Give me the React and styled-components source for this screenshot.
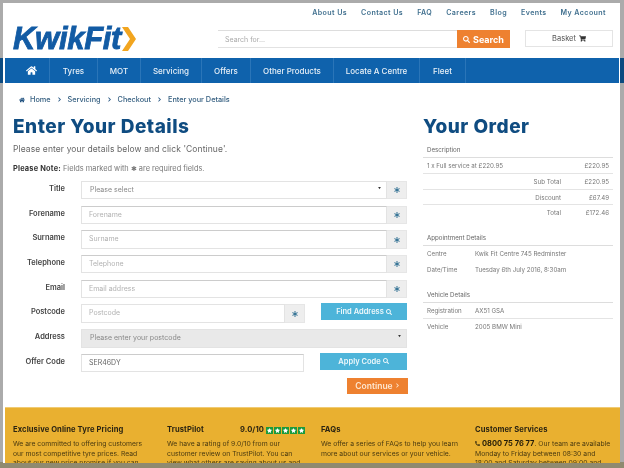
import React from "react";
import styled, { createGlobalStyle } from "styled-components";
import { FaHome, FaSearch, FaChevronRight, FaAsterisk, FaShoppingCart, FaPhoneAlt, FaStar } from "react-icons/fa";

const Global = createGlobalStyle`
  html, body { margin: 0; padding: 0; background: #aaa; }
  * { box-sizing: border-box; }
`;

const Frame = styled.div`
  width: 624px; height: 468px; overflow: hidden;
  padding: 3px 4px 5px 3px;
  font-family: "Inter", "Liberation Sans", sans-serif;
  color: #444;
  background: linear-gradient(to bottom, #ababab 58px, #0b4a80 58px, #0b4a80 83px, #ababab 83px, #ababab 462px, #8f8a70 462px);
`;
const Page = styled.div`
  height: 100%; background: #fff; overflow: hidden;
  display: flex; flex-direction: column; filter: blur(0.55px);
`;
const TopLinks = styled.div`
  display: flex; justify-content: flex-end; gap: 14px; height: 19px; padding: 5px 14px 0 0;
`;
const TopLink = styled.span`
  font-size: 7.1px; font-weight: 600; color: #41708f; letter-spacing: .4px; line-height: 9px;
`;
const Header = styled.div`
  display: flex; align-items: flex-start; height: 36px; padding-left: 10px;
`;
const Logo = styled.div`
  display: flex; align-items: center; width: 205px; height: 27px; margin-top: 3px; gap: 0;
`;
const LogoText = styled.span`
  font-family: "Liberation Sans", sans-serif; font-style: italic; font-weight: 700;
  font-size: 31px; letter-spacing: -.3px; color: #125ba4; -webkit-text-stroke: .8px #125ba4; line-height: 27px;
`;
const Search = styled.div`
  display: flex; width: 292px; height: 18px; margin-top: 8px;
  border-top: 1px solid #ddd; border-bottom: 1px solid #e2e2e2;
`;
const SearchInput = styled.div`
  flex: 1; font-size: 7px; color: #aaa; padding: 4px 0 0 7px; line-height: 9px;
`;
const SearchButton = styled.div`
  width: 53px; margin: -1px 0; background: #ee8130; color: #fff; font-size: 9px; font-weight: 700;
  display: flex; align-items: center; justify-content: center; gap: 3px;
  svg { width: 7px; height: 7px; }
`;
const Basket = styled.div`
  width: 88px; height: 17px; margin: 8px 0 0 15px; border: 1px solid #e4e4e4;
  display: flex; align-items: center; justify-content: center; gap: 3px; font-size: 7.5px; color: #555;
  svg { width: 7px; height: 7px; color: #333; }
`;
const Nav = styled.nav`
  display: flex; height: 25px; margin: 0 1px 0 2px; background: #0f62ac;
`;
const NavItem = styled.div`
  width: ${p => p.$w}px; border-right: 1px solid #2a75b8; color: #e8f0f7;
  display: flex; align-items: center; justify-content: center; font-size: 8px; font-weight: 500;
  padding-left: ${p => p.$home ? 9 : 0}px;
  svg { width: 11px; height: 11px; color: #fff; }
`;
const Crumbs = styled.div`
  display: flex; align-items: center; height: 32px; padding: 1px 0 0 16px; font-size: 7.3px; font-weight: 500; color: #355f80;
`;
const CrumbHome = styled.span`
  display: inline-flex; margin-right: 5px; svg { width: 6px; height: 6px; color: #1d4f7e; }
`;
const CrumbSep = styled.span`
  display: inline-flex; margin: 0 6px; svg { width: 5px; height: 5px; color: #1d4f7e; }
`;
const Main = styled.div`
  flex: 1; display: flex; min-height: 0;
`;
const Left = styled.div`
  width: 404px; padding-left: 10px; flex: none;
`;
const Right = styled.div`
  width: 210px; padding: 0 0 0 16px; flex: none;
`;
const Title = styled.h1`
  margin: 0; font-size: 19px; line-height: 24px; font-weight: 800; color: #0f4c81; letter-spacing: .5px;
`;
const Intro = styled.p`
  margin: 5px 0 0; font-size: 8.5px; line-height: 11px; color: #666; letter-spacing: .1px;
`;
const Note = styled.p`
  margin: 9px 0 0; height: 16px; font-size: 7.4px; line-height: 9px; color: #777;
  b { color: #333; font-weight: 700; letter-spacing: .2px; }
`;
const Form = styled.div`
  display: flex; flex-direction: column; gap: 6.3px; padding-top: 1px;
`;
const Row = styled.div`
  display: flex; height: 18.4px;
`;
const Label = styled.div`
  width: 52px; text-align: right; font-size: 7.5px; font-weight: 600; color: #444; line-height: 15px; margin-right: 16px; flex: none;
`;
const Control = styled.div`
  display: flex; width: ${p => p.$w}px; height: 100%; flex: none;
`;
const Field = styled.div`
  flex: 1; border: 1px solid #e3e3e3; border-top-color: ${p => p.$strong ? "#ccc" : "#e3e3e3"};
  background: ${p => p.$disabled ? "#e9e9e9" : "#fff"};
  padding-left: ${p => p.$select ? 8 : 7}px; font-size: 7px; line-height: 15px; color: ${p => p.$value ? "#666" : p.$select ? "#888" : "#b2b2b2"};
  display: flex; justify-content: space-between; padding-right: 5px;
`;
const Caret = styled.span`
  font-size: 3px; color: #333; line-height: 15px;
`;
const Addon = styled.div`
  width: 20px; background: #eee; border: 1px solid #e6e6e6; border-left: 0;
  display: flex; align-items: center; justify-content: center;
  svg { width: 6px; height: 6px; color: #2f6f92; }
`;
const Action = styled.div`
  width: 87px; margin: -1px 0 0 16px; height: 17px; background: #4db4d9; color: #eef8fb; font-size: 7.5px; font-weight: 600;
  display: flex; align-items: center; justify-content: center; gap: 2px;
  svg { width: 6px; height: 6px; }
`;
const Continue = styled.div`
  width: 61px; height: 16px; margin: -1px 0 0 334px; background: #ee8130; color: #fde6d0; font-size: 8.5px; font-weight: 600;
  display: flex; align-items: center; justify-content: center; gap: 2px;
  svg { width: 5px; height: 5px; }
`;
const OrderTable = styled.div`
  width: 190px; margin-top: ${p => p.$mt}px; font-size: 6.2px; color: #777;
`;
const OrderHead = styled.div`
  height: 16px; line-height: 15px; padding-left: 4px; color: #666; border-bottom: 1px solid #ddd;
`;
const OrderRow = styled.div`
  display: flex; height: 15.8px; line-height: 15px; padding: 0 4px; border-bottom: ${p => p.$line ? "1px solid #e4e4e4" : "0"};
`;
const Key = styled.span`
  width: 48px; flex: none;
`;
const Fill = styled.span`
  flex: 1;
`;
const Sum = styled.span`
  flex: 1; text-align: right; padding-right: 21px;
`;
const Amount = styled.span`
  width: 27px; text-align: right; flex: none;
`;
const Footer = styled.footer`
  height: 56px; margin: 0 0 0 2px; background: #e9b030; border-top: 1px solid #f0cb74;
  display: grid; grid-template-columns: 154px 154px 154px 1fr; padding: 17px 0 0 8px; overflow: hidden; flex: none;
`;
const FootCol = styled.div`
  width: 138px;
`;
const FootHead = styled.div`
  display: flex; justify-content: space-between; align-items: center; font-size: 7.6px; font-weight: 700; color: #2b2412; line-height: 10px; letter-spacing: .1px; height: 10px;
`;
const FootText = styled.p`
  margin: 4px 0 0; font-size: 6.8px; line-height: 9.7px; color: #4a3a10; white-space: nowrap;
  b { color: #221b08; font-weight: 700; font-size: 7.5px; }
  svg { width: 5px; height: 5px; margin-right: 2px; }
`;
const Rating = styled.span`
  display: flex; align-items: center; gap: 2px;
`;
const Stars = styled.span`
  display: flex; gap: 1px;
`;
const Star = styled.span`
  width: 7px; height: 7px; background: #1c9a3e; display: flex; align-items: center; justify-content: center;
  svg { width: 5px; height: 5px; color: #fff; }
`;

const Required = () => <Addon><FaAsterisk /></Addon>;
const nav = [["", 45, true], ["Tyres", 48], ["MOT", 43], ["Servicing", 61], ["Offers", 49], ["Other Products", 83], ["Locate A Centre", 86], ["Fleet", 46]];
const crumbs = ["Servicing", "Checkout", "Enter your Details"];
const fields = ["Forename", "Surname", "Telephone"];

export default function App() {
  return (
    <Frame>
      <Global />
      <Page>
        <TopLinks>
          {["About Us", "Contact Us", "FAQ", "Careers", "Blog", "Events", "My Account"].map(t => <TopLink key={t}>{t}</TopLink>)}
        </TopLinks>
        <Header>
          <Logo>
            <LogoText>KwikFit</LogoText>
            <svg width="16" height="24" viewBox="0 0 16 24"><path d="M1 0h6l8 12-8 12H1l8-12z" fill="#f2a51f" /></svg>
          </Logo>
          <Search>
            <SearchInput>Search for...</SearchInput>
            <SearchButton><FaSearch />Search</SearchButton>
          </Search>
          <Basket>Basket <FaShoppingCart /></Basket>
        </Header>
        <Nav>
          {nav.map(([t, w, home], i) => <NavItem key={i} $w={w} $home={home}>{home ? <FaHome /> : t}</NavItem>)}
        </Nav>
        <Crumbs>
          <CrumbHome><FaHome /></CrumbHome>Home
          {crumbs.map(c => <React.Fragment key={c}><CrumbSep><FaChevronRight /></CrumbSep>{c}</React.Fragment>)}
        </Crumbs>
        <Main>
          <Left>
            <Title>Enter Your Details</Title>
            <Intro>Please enter your details below and click 'Continue'.</Intro>
            <Note><b>Please Note:</b> Fields marked with ✱ are required fields.</Note>
            <Form>
              <Row>
                <Label>Title</Label>
                <Control $w={326}><Field $select>Please select<Caret>▼</Caret></Field><Required /></Control>
              </Row>
              {fields.map(f => (
                <Row key={f}>
                  <Label>{f}</Label>
                  <Control $w={326}><Field $strong>{f}</Field><Required /></Control>
                </Row>
              ))}
              <Row>
                <Label>Email</Label>
                <Control $w={326}><Field $strong>Email address</Field><Required /></Control>
              </Row>
              <Row>
                <Label>Postcode</Label>
                <Control $w={224}><Field>Postcode</Field><Required /></Control>
                <Action>Find Address <FaSearch /></Action>
              </Row>
              <Row>
                <Label>Address</Label>
                <Control $w={326}><Field $select $disabled>Please enter your postcode<Caret>▼</Caret></Field></Control>
              </Row>
              <Row>
                <Label>Offer Code</Label>
                <Control $w={223}><Field $value $strong>SER46DY</Field></Control>
                <Action>Apply Code <FaSearch /></Action>
              </Row>
              <Continue>Continue <FaChevronRight /></Continue>
            </Form>
          </Left>
          <Right>
            <Title>Your Order</Title>
            <OrderTable $mt={3}>
              <OrderHead>Description</OrderHead>
              <OrderRow $line><Fill>1 x Full service at £220.95</Fill><Amount>£220.95</Amount></OrderRow>
              <OrderRow $line><Sum>Sub Total</Sum><Amount>£220.95</Amount></OrderRow>
              <OrderRow $line><Sum>Discount</Sum><Amount>£67.49</Amount></OrderRow>
              <OrderRow><Sum>Total</Sum><Amount>£172.46</Amount></OrderRow>
            </OrderTable>
            <OrderTable $mt={9}>
              <OrderHead>Appointment Details</OrderHead>
              <OrderRow><Key>Centre</Key>Kwik Fit Centre 745 Redminster</OrderRow>
              <OrderRow><Key>Date/Time</Key>Tuesday 6th July 2016, 8:30am</OrderRow>
            </OrderTable>
            <OrderTable $mt={9}>
              <OrderHead>Vehicle Details</OrderHead>
              <OrderRow $line><Key>Registration</Key>AX51 GSA</OrderRow>
              <OrderRow><Key>Vehicle</Key>2005 BMW Mini</OrderRow>
            </OrderTable>
          </Right>
        </Main>
        <Footer>
          <FootCol>
            <FootHead>Exclusive Online Tyre Pricing</FootHead>
            <FootText>We are committed to offering customers<br />our most competitive tyre prices. Read<br />about our new price promise if you can</FootText>
          </FootCol>
          <FootCol>
            <FootHead>TrustPilot
              <Rating>9.0/10 <Stars>{[0, 1, 2, 3, 4].map(i => <Star key={i}><FaStar /></Star>)}</Stars></Rating>
            </FootHead>
            <FootText>We have a rating of 9.0/10 from our<br />customer review on TrustPilot. You can<br />view what others are saying about us and</FootText>
          </FootCol>
          <FootCol>
            <FootHead>FAQs</FootHead>
            <FootText>We offer a series of FAQs to help you learn<br />more about our services or your vehicle.</FootText>
          </FootCol>
          <FootCol>
            <FootHead>Customer Services</FootHead>
            <FootText><FaPhoneAlt /><b>0800 75 76 77</b>. Our team are available<br />Monday to Friday between 08:30 and<br />18:00 and Saturday between 09:00 and</FootText>
          </FootCol>
        </Footer>
      </Page>
    </Frame>
  );
}
